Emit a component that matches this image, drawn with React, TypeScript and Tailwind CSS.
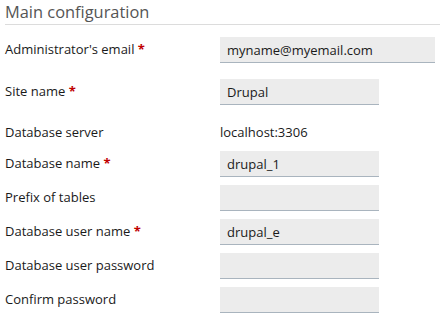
import React from 'react';

interface FieldRowProps {
    label: string;
    required?: boolean;
    value?: string;
    wide?: boolean;
    className?: string;
}

const FieldRow: React.FC<FieldRowProps> = ({ label, required, value = '', wide, className = '' }) => {
    return (
        <div className={`flex items-center h-[26px] ${className}`}>
            <label className="w-[220px] pl-[5px] text-[13px] text-[#1a1a1a]">
                {label}
                {required && <span className="text-[#c00000] font-bold"> *</span>}
            </label>
            <input
                readOnly
                value={value}
                className={`${wide ? 'w-[215px]' : 'w-[159px]'} h-[26px] bg-[#ececec] border-b border-[#a9b4be] px-[7px] text-[13px] text-[#1a1a1a] outline-none`}
            />
        </div>
    );
};

export default function App() {
    return (
        <div className="w-[440px] h-[325px] bg-white flex flex-col" style={{ fontFamily: '"Open Sans", "Liberation Sans", sans-serif' }}>
            <div className="h-[25px] ml-[5px] border-b border-[#dcdcdc] flex items-end">
                <h2 className="text-[16.4px] leading-[24px] text-[#555555]">Main configuration</h2>
            </div>

            <FieldRow className="mt-[12px]" label="Administrator's email" required value="myname@myemail.com" wide />
            <FieldRow className="mt-[16px]" label="Site name" required value="Drupal" />

            <div className="flex items-center h-[26px] mt-[15px] text-[13px] text-[#1a1a1a]">
                <span className="w-[220px] pl-[5px]">Database server</span>
                <span>localhost:3306</span>
            </div>

            <FieldRow className="mt-[5px]" label="Database name" required value="drupal_1" />
            <FieldRow className="mt-[8px]" label="Prefix of tables" />
            <FieldRow className="mt-[8px]" label="Database user name" required value="drupal_e" />
            <FieldRow className="mt-[8px]" label="Database user password" />
            <FieldRow className="mt-[8px]" label="Confirm password" />
        </div>
    );
}
